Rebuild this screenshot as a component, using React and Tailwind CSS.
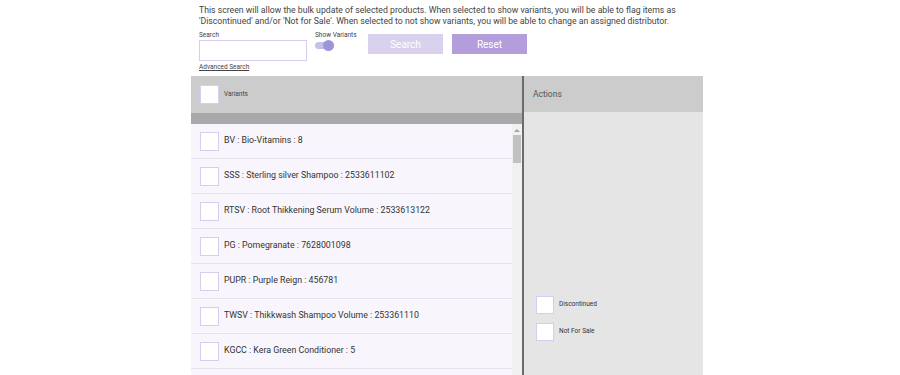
import { useState } from 'react'

const variants = [
  'BV : Bio-Vitamins : 8',
  'SSS : Sterling silver Shampoo : 2533611102',
  'RTSV : Root Thikkening Serum Volume : 2533613122',
  'PG : Pomegranate : 7628001098',
  'PUPR : Purple Reign : 456781',
  'TWSV : Thikkwash Shampoo Volume : 253361110',
  'KGCC : Kera Green Conditioner : 5',
]

function Box({ className = '' }) {
  return <div className={'h-[19px] w-[19px] shrink-0 border border-[#d6cdf0] bg-white ' + className} />
}

export default function App() {
  const [showVariants, setShowVariants] = useState(true)

  return (
    <div className="h-[375px] overflow-hidden bg-white pl-[191px] font-['Roboto',sans-serif] text-[#333]">
      <div className="w-[512px]">
        <p className="pl-2 pt-[5px] text-[8.7px] leading-[11px] text-[#444]">
          This screen will allow the bulk update of selected products. When selected to show variants, you will be able to flag items as
          'Discontinued' and/or 'Not for Sale'. When selected to not show variants, you will be able to change an assigned distributor.
        </p>

        <div className="mt-[4px] flex items-start pl-2">
          <div className="w-[108px]">
            <div className="text-[6.5px] leading-[8px] text-[#444]">Search</div>
            <input className="mt-[1px] block h-[21px] w-[108px] border border-[#d6cdf0] bg-white outline-none" />
            <div className="mt-[2px] text-[6.5px] leading-[8px] text-[#444] underline">Advanced Search</div>
          </div>
          <div className="ml-[8px] w-[53px]">
            <div className="text-[6.5px] leading-[8px] text-[#444]">Show Variants</div>
            <button
              onClick={() => setShowVariants(!showVariants)}
              className="relative mt-[3px] block h-[7px] w-[19px] rounded-full bg-[#c5c0e6]"
            >
              <span className="absolute -top-[2px] right-0 h-[11px] w-[11px] rounded-full bg-[#9d95d8]" />
            </button>
          </div>
          <button className="mt-[3px] h-[20px] w-[75px] bg-[#dad1ef] text-[10px] text-white">Search</button>
          <button className="ml-[9px] mt-[3px] h-[20px] w-[75px] bg-[#b39ddb] text-[10px] text-white">Reset</button>
        </div>

        <div className="mt-[5px] flex h-[300px]">
          <div className="flex w-[331px] flex-col">
            <div className="flex h-[37px] items-center bg-[#cccccc] pl-[9px]">
              <Box />
              <span className="ml-[5px] text-[6.5px] text-[#444]">Variants</span>
            </div>
            <div className="h-[11px] bg-[#a9a9a9]" />
            <div className="flex min-h-0 flex-1">
              <div className="flex-1 overflow-hidden bg-[#f8f6fc]">
                {variants.map((v, i) => (
                  <div key={i} className="flex h-[35px] items-center border-b border-[#e4e1ea] pl-[9px]">
                    <Box />
                    <span className="ml-[5px] text-[8.8px] text-[#333]">{v}</span>
                  </div>
                ))}
              </div>
              <div className="flex w-[10px] flex-col items-center bg-[#f1f1f1]">
                <span className="mt-[5px] h-0 w-0 border-x-[3px] border-b-[3px] border-x-transparent border-b-[#a3a3a3]" />
                <div className="mt-[3px] h-[28px] w-[8px] bg-[#c1c1c1]" />
              </div>
            </div>
          </div>
          <div className="w-[2px] bg-[#6b6b6b]" />
          <div className="flex w-[179px] flex-col bg-[#e5e5e5]">
            <div className="flex h-[36px] items-center bg-[#cccccc] pl-[9px] text-[8.5px] text-[#555]">Actions</div>
            <div className="flex flex-col gap-[9px] pl-[12px] pt-[184px]">
              <div className="flex items-center">
                <Box className="!h-[18px] !w-[18px]" />
                <span className="ml-[5px] text-[6.5px] text-[#333]">Discontinued</span>
              </div>
              <div className="flex items-center">
                <Box className="!h-[18px] !w-[18px]" />
                <span className="ml-[5px] text-[6.5px] text-[#333]">Not For Sale</span>
              </div>
            </div>
          </div>
        </div>
      </div>
    </div>
  )
}
